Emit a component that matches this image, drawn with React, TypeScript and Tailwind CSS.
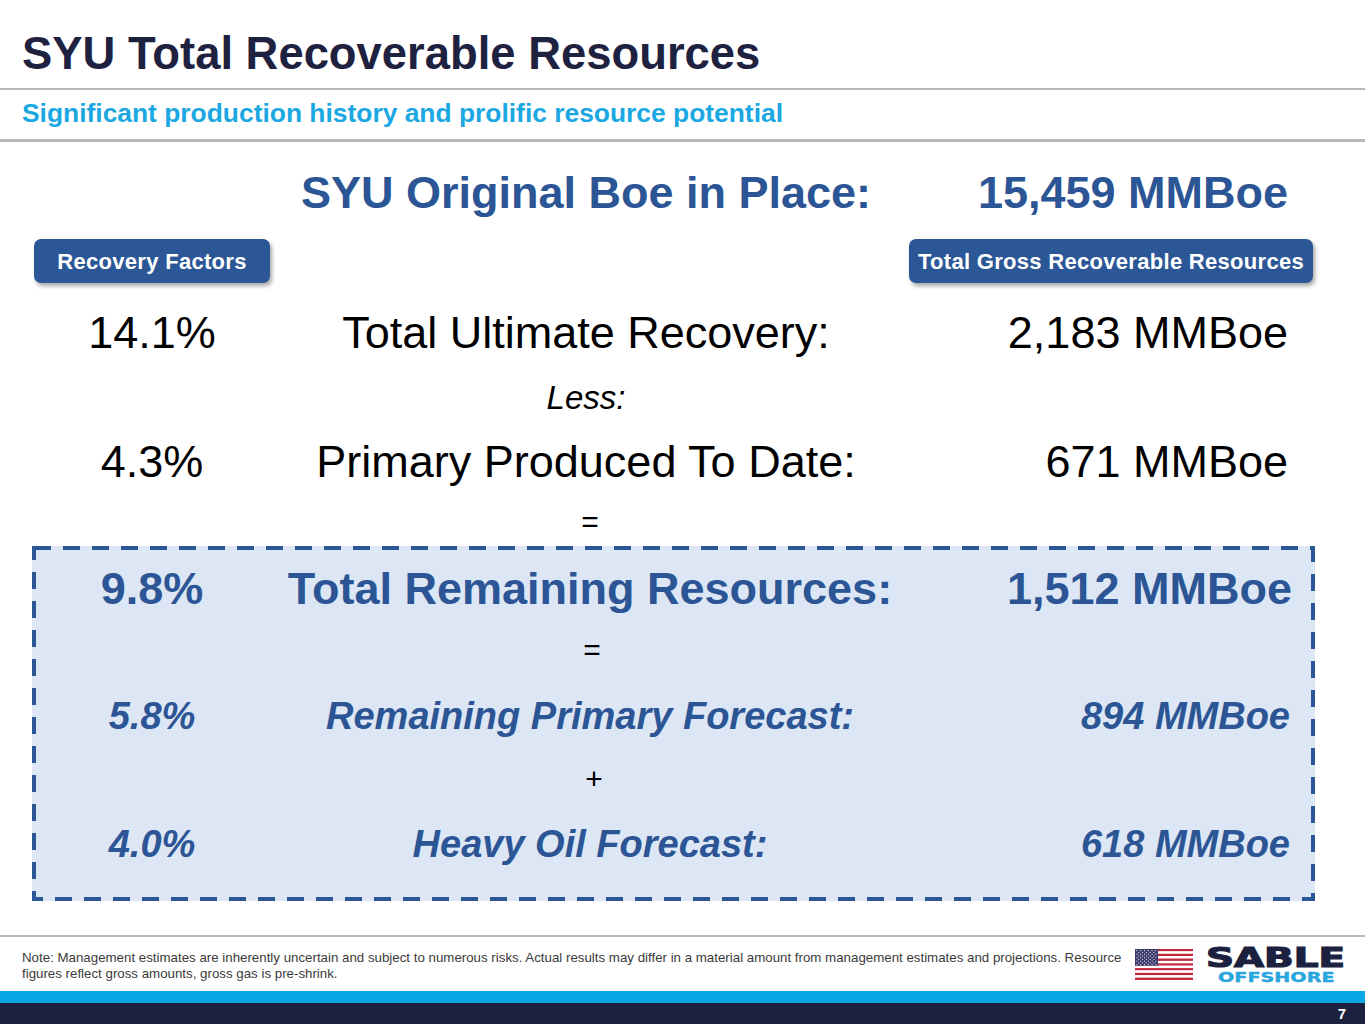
import React from 'react';

const BLUE = 'text-[#2b5594]';

function Flag() {
  const stripes = Array.from({ length: 13 }, (_, i) => i);
  const stars: { x: number; y: number }[] = [];
  for (let r = 0; r < 9; r++) {
    const cols = r % 2 === 0 ? 6 : 5;
    for (let c = 0; c < cols; c++) {
      stars.push({ x: (r % 2 === 0 ? 1.9 : 3.8) + c * 3.8, y: 1.6 + r * 1.75 });
    }
  }
  return (
    <svg width="58" height="31" viewBox="0 0 58 31" className="shrink-0">
      {stripes.map((i) => (
        <rect key={i} x="0" y={(i * 31) / 13} width="58" height={31 / 13} fill={i % 2 === 0 ? '#c1273d' : '#ffffff'} />
      ))}
      <rect x="0" y="0" width="23" height={(7 * 31) / 13} fill="#3c3b6e" />
      {stars.map((s, i) => (
        <circle key={i} cx={s.x} cy={s.y} r="0.55" fill="#ffffff" />
      ))}
    </svg>
  );
}

function Logo() {
  return (
    <div className="flex items-center">
      <Flag />
      <div className="ml-[13px] flex flex-col w-[139px]">
        <span className="block origin-left scale-x-[1.44] font-['DejaVu_Sans',sans-serif] font-bold text-[27px] leading-[26px] text-[#1c2140] whitespace-nowrap [-webkit-text-stroke:1.2px_#1c2140]">
          SABLE
        </span>
        <span className="block ml-[12px] origin-left scale-x-[1.42] font-['DejaVu_Sans',sans-serif] font-bold text-[13.5px] leading-[13px] text-[#2aa6de] whitespace-nowrap [-webkit-text-stroke:0.4px_#2aa6de]">
          OFFSHORE
        </span>
      </div>
    </div>
  );
}

function Pill({ children, width }: { children: React.ReactNode; width: string }) {
  return (
    <div
      className={`${width} h-[44px] flex items-center justify-center rounded-[7px] bg-[#2b5797] text-white font-bold text-[22px] tracking-[0.3px] shadow-[2px_3px_4px_rgba(0,0,0,0.35)] whitespace-nowrap`}
    >
      {children}
    </div>
  );
}

function Row({
  left,
  mid,
  right,
  className,
  height,
}: {
  left: string;
  mid: string;
  right: string;
  className: string;
  height: string;
}) {
  return (
    <div className={`grid grid-cols-[240px_628px_388px] items-center ${height} ${className}`}>
      <div className="text-center whitespace-nowrap">{left}</div>
      <div className="text-center whitespace-nowrap">{mid}</div>
      <div className="text-right whitespace-nowrap">{right}</div>
    </div>
  );
}

function Sign({ children, className = '' }: { children: React.ReactNode; className?: string }) {
  return (
    <div className={`grid grid-cols-[240px_628px_388px] h-[30px] items-center text-[30px] leading-none text-black ${className}`}>
      <div />
      <div className="text-center pl-[8px]">{children}</div>
      <div />
    </div>
  );
}

export default function App() {
  return (
    <div className="w-[1365px] h-[1024px] bg-white flex flex-col font-['Liberation_Sans',Arial,sans-serif] overflow-hidden">
      {/* header */}
      <div className="pl-[22px] pt-[31px] pb-[12px] text-[45.4px] leading-[45px] font-bold text-[#1e2240]">
        SYU Total Recoverable Resources
      </div>
      <div className="h-[2px] bg-[#b8b8b8]" />
      <div className="pl-[22px] pt-[10px] pb-[13px] text-[26.4px] leading-[26px] font-bold text-[#1ba8e2]">
        Significant production history and prolific resource potential
      </div>
      <div className="h-[3px] bg-[#b8b8b8]" />

      {/* body */}
      <div className="pl-[32px] pt-[28px]">
        <Row
          left=""
          mid="SYU Original Boe in Place:"
          right="15,459 MMBoe"
          height="h-[45px]"
          className={`text-[45px] leading-none font-bold ${BLUE}`}
        />
      </div>

      <div className="mt-[24px] pl-[34px] pr-[52px] flex justify-between">
        <Pill width="w-[236px]">Recovery Factors</Pill>
        <Pill width="w-[404px]">Total Gross Recoverable Resources</Pill>
      </div>

      <div className="pl-[32px] mt-[27px]">
        <Row
          left="14.1%"
          mid="Total Ultimate Recovery:"
          right="2,183 MMBoe"
          height="h-[45px]"
          className="text-[45px] leading-none text-black"
        />
        <div className="grid grid-cols-[240px_628px_388px] h-[34px] mt-[25px] items-center">
          <div />
          <div className="text-center italic text-[33px] leading-none text-black">Less:</div>
          <div />
        </div>
        <div className="mt-[25px]">
          <Row
            left="4.3%"
            mid="Primary Produced To Date:"
            right="671 MMBoe"
            height="h-[45px]"
            className="text-[45px] leading-none text-black"
          />
        </div>
        <Sign className="mt-[23px]">=</Sign>
      </div>

      {/* highlighted box */}
      <div className="relative mt-[9px] ml-[32px] w-[1283px] h-[355px] bg-[#dce6f4] px-[4px] pt-[20px]">
        <svg
          className="absolute inset-0 pointer-events-none"
          width="1283"
          height="355"
          viewBox="0 0 1283 355"
        >
          <rect
            x="2"
            y="2"
            width="1279"
            height="351"
            fill="none"
            stroke="#2b5797"
            strokeWidth="4"
            strokeDasharray="17 12"
          />
        </svg>
        <Row
          left="9.8%"
          mid="Total Remaining Resources:"
          right="1,512 MMBoe"
          height="h-[45px]"
          className={`text-[45px] leading-none font-bold ${BLUE} [&>div:first-child]:pr-[8px]`}
        />
        <Sign className="mt-[24px] [&>div:nth-child(2)]:pr-[4px]">=</Sign>
        <div className="mt-[32px]">
          <Row
            left="5.8%"
            mid="Remaining Primary Forecast:"
            right="894 MMBoe"
            height="h-[38px]"
            className={`text-[38px] leading-none font-bold italic ${BLUE} [&>div:first-child]:pr-[8px] [&>div:last-child]:pr-[2px]`}
          />
        </div>
        <Sign className="mt-[29px]">+</Sign>
        <div className="mt-[31px]">
          <Row
            left="4.0%"
            mid="Heavy Oil Forecast:"
            right="618 MMBoe"
            height="h-[38px]"
            className={`text-[38px] leading-none font-bold italic ${BLUE} [&>div:first-child]:pr-[8px] [&>div:last-child]:pr-[2px]`}
          />
        </div>
      </div>

      {/* footer */}
      <div className="mt-auto">
        <div className="h-[2px] bg-[#b8b8b8]" />
        <div className="h-[54px] flex items-center justify-between pl-[22px] pr-[20px]">
          <p className="w-[1104px] text-[13.3px] leading-[16px] text-[#3b3b3b] pt-[3px]">
            Note: Management estimates are inherently uncertain and subject to numerous risks. Actual results may differ in a material amount from management estimates and projections. Resource figures reflect gross amounts, gross gas is pre-shrink.
          </p>
          <Logo />
        </div>
        <div className="h-[12px] bg-[#06a7e2]" />
        <div className="h-[21px] bg-[#1c2140] flex items-center justify-end pr-[19px]">
          <span className="text-white font-bold text-[15px] leading-none">7</span>
        </div>
      </div>
    </div>
  );
}
